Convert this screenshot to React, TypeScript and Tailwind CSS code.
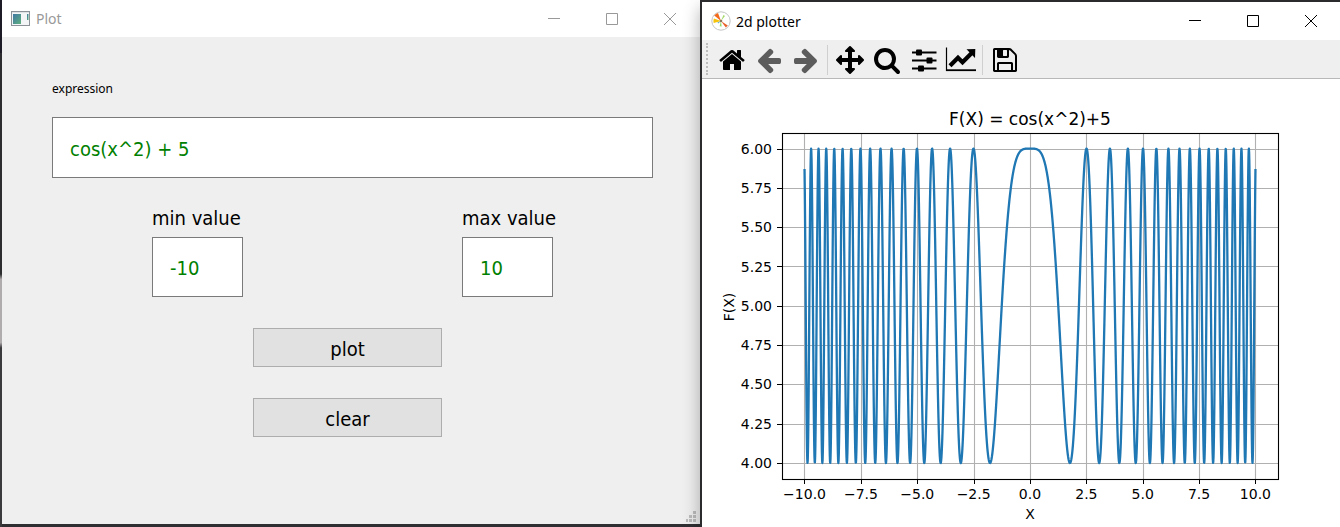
import { useState, type ReactNode } from "react";

const HOME =
  "M1472 992v480q0 26-19 45t-45 19h-384v-384h-256v384h-384q-26 0-45-19t-19-45v-480q0-1 .5-3t.5-3l575-474 575 474q1 2 1 6zm223-69l-62 74q-8 9-21 11h-3q-13 0-21-7l-692-577-692 577q-12 8-24 7-13-2-21-11l-62-74q-8-10-7-23.5t11-21.5l719-599q32-26 76-26t76 26l244 204v-195q0-14 9-23t23-9h192q14 0 23 9t9 23v408l219 182q10 8 11 21.5t-7 23.5z";
const ARROW =
  "M1664 896v128q0 53-32.5 90.5t-84.5 37.5h-704l293 294q38 36 38 90t-38 90l-75 76q-37 37-90 37-52 0-91-37l-651-652q-37-37-37-90 0-52 37-91l651-650q38-38 91-38 52 0 90 38l75 74q38 38 38 91t-38 91l-293 293h704q52 0 84.5 37.5t32.5 90.5z";
const MOVE =
  "M1792 896q0 26-19 45l-256 256q-19 19-45 19t-45-19-19-45v-128h-384v384h128q26 0 45 19t19 45-19 45l-256 256q-19 19-45 19t-45-19l-256-256q-19-19-19-45t19-45 45-19h128v-384h-384v128q0 26-19 45t-45 19-45-19l-256-256q-19-19-19-45t19-45l256-256q19-19 45-19t45 19 19 45v128h384v-384h-128q-26 0-45-19t-19-45 19-45l256-256q19-19 45-19t45 19l256 256q19 19 19 45t-19 45-45 19h-128v384h384v-128q0-26 19-45t45-19 45 19l256 256q19 19 19 45z";
const SEARCH =
  "M1216 832q0-185-131.5-316.5t-316.5-131.5-316.5 131.5-131.5 316.5 131.5 316.5 316.5 131.5 316.5-131.5 131.5-316.5zm512 832q0 52-38 90t-90 38q-54 0-90-38l-343-342q-179 124-399 124-143 0-273.5-55.5t-225-150-150-225-55.5-273.5 55.5-273.5 150-225 225-150 273.5-55.5 273.5 55.5 225 150 150 225 55.5 273.5q0 220-124 399l343 343q37 37 37 90z";
const SAVE =
  "M512 1536h768v-384h-768v384zm896 0h128v-896q0-14-10-38.5t-20-34.5l-281-281q-10-10-34-20t-39-10v416q0 40-28 68t-68 28h-576q-40 0-68-28t-28-68v-416h-128v1280h128v-416q0-40 28-68t68-28h832q40 0 68 28t28 68v416zm-384-928v-320q0-13-9.5-22.5t-22.5-9.5h-192q-13 0-22.5 9.5t-9.5 22.5v320q0 13 9.5 22.5t22.5 9.5h192q13 0 22.5-9.5t9.5-22.5zm640 32v928q0 40-28 68t-68 28h-1344q-40 0-68-28t-28-68v-1344q0-40 28-68t68-28h928q40 0 88 20t76 48l280 280q28 28 48 76t20 88z";

function Glyph({ d, flip = false }: { d: string; flip?: boolean }) {
  return (
    <svg className="size-7" viewBox="0 0 1792 1792" fill="currentColor" aria-hidden="true">
      <path d={d} transform={flip ? "translate(1792 0) scale(-1 1)" : undefined} />
    </svg>
  );
}

function SlidersIcon() {
  return (
    <svg className="size-7" viewBox="0 0 28 28" fill="currentColor" aria-hidden="true">
      <path d="M2 5.500h24.500v2H2zM2 13.500h24.500v2H2zM2 21.500h24.500v2H2z" />
      <rect x="6" y="3.500" width="6" height="6" rx="1" />
      <rect x="16.500" y="11.500" width="6" height="6" rx="1" />
      <rect x="8" y="19.500" width="6" height="6" rx="1" />
    </svg>
  );
}

function LineChartIcon() {
  return (
    <svg className="h-7 w-8" viewBox="0 0 32 28" fill="none" stroke="currentColor" aria-hidden="true">
      <path d="M1.500 1.500V25" strokeWidth="1.200" />
      <path d="M1 24.200H31" strokeWidth="1.800" />
      <path d="M5 19.800L13 11.800L17.500 16.200L26.500 7.200" strokeWidth="4.200" />
      <path d="M21.500 3.300L30.300 3.100L30 11.900Z" fill="currentColor" stroke="none" />
    </svg>
  );
}

function WindowControls() {
  const button = "flex h-full w-[58px] items-center justify-center";
  return (
    <div className="ml-auto flex h-full">
      <button type="button" aria-label="Minimize" className={button}>
        <svg className="size-3" viewBox="0 0 12 12" stroke="currentColor" aria-hidden="true">
          <path d="M0 5.500H12" />
        </svg>
      </button>
      <button type="button" aria-label="Maximize" className={button}>
        <svg className="size-3" viewBox="0 0 12 12" fill="none" stroke="currentColor" aria-hidden="true">
          <path d="M.5.500H11.500V11.500H.5Z" />
        </svg>
      </button>
      <button type="button" aria-label="Close" className={button}>
        <svg className="size-3" viewBox="0 0 12 12" stroke="currentColor" aria-hidden="true">
          <path d="M0 0L12 12M12 0L0 12" />
        </svg>
      </button>
    </div>
  );
}

function AppIcon() {
  return (
    <svg className="h-4 w-5" viewBox="0 0 20 16" aria-hidden="true">
      <defs>
        <linearGradient id="pane" x1="0" y1="0" x2="1" y2="1">
          <stop offset="0" stopColor="#4178a4" />
          <stop offset="1" stopColor="#5fb07e" />
        </linearGradient>
      </defs>
      <rect x=".5" y=".5" width="18" height="14" fill="#f4f5f6" stroke="#8d9298" />
      <rect x="2" y="3" width="8" height="10" fill="url(#pane)" />
      <rect x="16" y="3" width="1.500" height="6" fill="url(#pane)" />
      <path d="M1 1.500H18" stroke="#dfe2e5" />
    </svg>
  );
}

function PlotLibIcon() {
  return (
    <svg className="size-5" viewBox="0 0 20 20" aria-hidden="true">
      <circle cx="10" cy="10" r="9.200" fill="#fff" stroke="#c4c4c4" />
      <path d="M10 10L3.200 4.600A8.600 8.600 0 0 1 7 2Z" fill="#f26a1b" />
      <path d="M10 10L2.700 12A7 7 0 0 1 2.900 7.500Z" fill="#f5c30c" />
      <path d="M10 10L16.800 14.500L14.800 16.600Z" fill="#e8622a" />
      <path d="M10 10L10.600 15.500L8.600 15.300Z" fill="#8fdc6a" />
      <path d="M10 10L12.400 4L14 5Z" fill="#a6d86a" />
      <path d="M10 10L7.200 12.400L6.400 11.400Z" fill="#5aa9c8" />
      <circle cx="10" cy="10" r="1.300" fill="#8a7a5a" />
    </svg>
  );
}

function ToolButton({ label, dim = false, children }: { label: string; dim?: boolean; children: ReactNode }) {
  return (
    <button
      type="button"
      aria-label={label}
      className={`flex h-full w-[37px] shrink-0 items-center justify-center ${dim ? "text-[#5c5c5c]" : "text-black"}`}
    >
      {children}
    </button>
  );
}

function Separator() {
  return <div className="mx-[3px] h-[30px] w-px shrink-0 bg-[#cfcfcf]" />;
}

function Toolbar() {
  return (
    <div className="flex h-[39px] items-center border-b border-[#b8b8b8] bg-[#efefef]">
      <div className="ml-1 mr-[5px] h-8 w-0 border-l-2 border-dotted border-[#bdbdbd]" />
      <div className="flex h-full items-center pt-[2px]">
        <ToolButton label="Home"><Glyph d={HOME} /></ToolButton>
        <ToolButton label="Back" dim><Glyph d={ARROW} /></ToolButton>
        <ToolButton label="Forward" dim><Glyph d={ARROW} flip /></ToolButton>
        <Separator />
        <ToolButton label="Pan"><Glyph d={MOVE} /></ToolButton>
        <ToolButton label="Zoom"><Glyph d={SEARCH} /></ToolButton>
        <ToolButton label="Subplots"><SlidersIcon /></ToolButton>
        <ToolButton label="Customize"><LineChartIcon /></ToolButton>
        <Separator />
        <ToolButton label="Save"><Glyph d={SAVE} /></ToolButton>
      </div>
    </div>
  );
}

const xTicks = [-10, -7.5, -5, -2.5, 0, 2.5, 5, 7.5, 10];
const yTicks = [6, 5.75, 5.5, 5.25, 5, 4.75, 4.5, 4.25, 4];
const toX = (v: number) => 328 + v * 22.545;
const toY = (v: number) => 226.8 - (v - 5) * 157.2;
const crisp = (v: number) => Math.floor(v) + 0.5;

const curve = Array.from({ length: 2001 }, (_, i) => {
  const x = -10 + i / 100;
  return `${toX(x).toFixed(2)},${toY(Math.cos(x * x) + 5).toFixed(2)}`;
}).join(" ");

function Figure() {
  return (
    <svg
      className="block h-auto w-full bg-white font-['DejaVu_Sans',sans-serif] text-[14px]"
      viewBox="0 0 638 448"
      role="img"
      aria-label="F(X) = cos(x^2)+5"
    >
      <g stroke="#b0b0b0" strokeWidth="1.100">
        {xTicks.map((t) => (
          <path key={t} d={`M${crisp(toX(t) + 0.4)} 54V400`} />
        ))}
        {yTicks.map((t) => (
          <path key={t} d={`M81 ${crisp(toY(t) + 0.4)}H576`} />
        ))}
      </g>
      <polyline points={curve} fill="none" stroke="#1f77b4" strokeWidth="2.300" strokeLinejoin="round" strokeLinecap="square" />
      <rect x="80.500" y="54.500" width="496" height="346" fill="none" stroke="#000" strokeWidth="1.100" />
      {xTicks.map((t) => (
        <g key={t}>
          <path d={`M${crisp(toX(t) + 0.4)} 401v4`} stroke="#000" />
          <text x={toX(t)} y="420" textAnchor="middle">
            {t.toFixed(1).replace("-", "−")}
          </text>
        </g>
      ))}
      {yTicks.map((t) => (
        <g key={t}>
          <path d={`M80 ${crisp(toY(t) + 0.4)}h-5`} stroke="#000" />
          <text x="70" y={Math.round(toY(t)) + 5} textAnchor="end">
            {t.toFixed(2)}
          </text>
        </g>
      ))}
      <text x="328" y="46" textAnchor="middle" className="text-[17px]">
        F(X) = cos(x^2)+5
      </text>
      <text x="328" y="440" textAnchor="middle">X</text>
      <text transform="translate(32 228) rotate(-90)" textAnchor="middle">F(X)</text>
    </svg>
  );
}

const field =
  "w-full border border-[#7a7a7a] bg-white px-[17px] pt-[2px] text-xl text-[#008000] outline-none";

function ExpressionWindow() {
  const [expression, setExpression] = useState("cos(x^2) + 5");
  const [min, setMin] = useState("-10");
  const [max, setMax] = useState("10");
  const clear = () => {
    setExpression("");
    setMin("");
    setMax("");
  };
  const action =
    "h-[39px] w-[189px] border border-[#adadad] bg-[#e1e1e1] pt-[2px] text-xl text-black";

  return (
    <section className="flex min-w-0 flex-col bg-[#efefef]">
      <header className="flex h-[37px] items-center gap-[5px] bg-white pl-[9px] pr-px text-[14px] text-[#999999]">
        <AppIcon />
        <h1>Plot</h1>
        <WindowControls />
      </header>
      <form
        className="flex flex-col pl-[50px] pr-[47px] pt-11 font-['DejaVu_Sans_Condensed','Noto_Sans',sans-serif]"
        onSubmit={(e) => e.preventDefault()}
      >
        <label htmlFor="expression" className="font-['Noto_Sans',sans-serif] text-xs text-black">expression</label>
        <input
          id="expression"
          className={`${field} mt-5 h-[61px]`}
          value={expression}
          onChange={(e) => setExpression(e.target.value)}
        />
        <div className="mt-7 flex justify-between px-[100px] text-xl text-black">
          <div className="w-[91px]">
            <label htmlFor="min" className="block whitespace-nowrap leading-6">min value</label>
            <input id="min" className={`${field} mt-[7px] h-[60px]`} value={min} onChange={(e) => setMin(e.target.value)} />
          </div>
          <div className="w-[91px]">
            <label htmlFor="max" className="block whitespace-nowrap leading-6">max value</label>
            <input id="max" className={`${field} mt-[7px] h-[60px]`} value={max} onChange={(e) => setMax(e.target.value)} />
          </div>
        </div>
        <div className="mt-[31px] flex flex-col items-center gap-[31px] pr-[10px]">
          <button type="submit" className={action}>plot</button>
          <button type="button" className={action} onClick={clear}>clear</button>
        </div>
      </form>
      <div className="mt-auto flex justify-end pb-[2px] pr-[3px]">
        <svg className="size-[11px]" viewBox="0 0 11 11" fill="#bcbcbc" aria-hidden="true">
          <path d="M7 0h3v3h-3zM7 4h3v3h-3zM3 4h3v3h-3zM7 8h3v3h-3zM3 8h3v3h-3zM0 8h2v3h-2z" />
        </svg>
      </div>
    </section>
  );
}

function PlotWindow() {
  return (
    <section className="relative min-w-0 border-l-2 border-t-2 border-[#2b2b2e] bg-white shadow-[0_8px_16px_rgba(0,0,0,0.3)]">
      <header className="flex h-[38px] items-center gap-[5px] pl-[9px] text-[14px] text-black">
        <PlotLibIcon />
        <h1>2d plotter</h1>
        <WindowControls />
      </header>
      <Toolbar />
      <Figure />
    </section>
  );
}

export default function App() {
  return (
    <main className="grid min-h-screen grid-cols-[2px_698fr_640fr] overflow-hidden bg-[#2f2f32] font-['Noto_Sans',sans-serif]">
      <div className="bg-[linear-gradient(#1c1b26_10%,#2d2d2f_10%,#2d2d2f_52%,#b0abad_53%,#b0abad_65%,#3a3a3c_66%)]" />
      <div className="grid min-w-0 pb-[3px]">
        <ExpressionWindow />
      </div>
      <PlotWindow />
    </main>
  );
}
